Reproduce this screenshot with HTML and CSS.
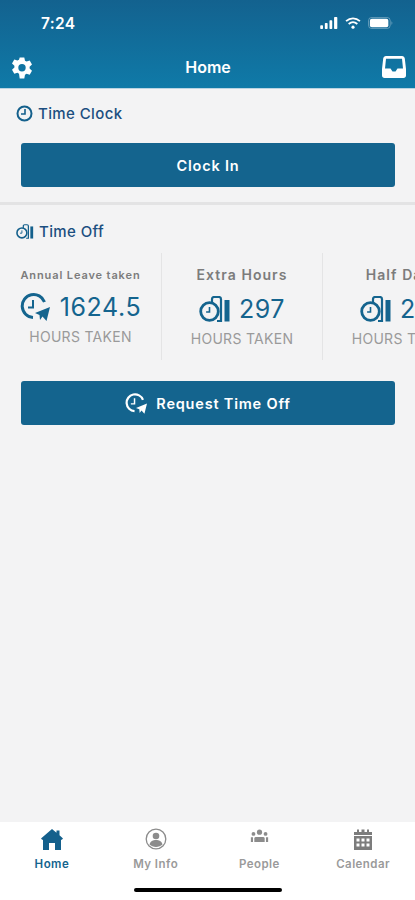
FILE: index.html
```html
<!DOCTYPE html>
<html lang="en">
<head>
    <meta charset="UTF-8">
    <meta name="viewport" content="width=device-width, initial-scale=1.0">
    <title>Home</title>
    <link rel="stylesheet" href="styles.css">
</head>
<body>
    <svg class="icon-defs" width="0" height="0">
        <symbol id="timer-bars" viewBox="0 0 32 26">
            <path d="M13 7V3.200C13 2 14 1 15.200 1h4.600C21 1 22 2 22 3.200V25h-4" fill="none" stroke="currentColor" stroke-width="2.200"/>
            <circle cx="10.500" cy="15.500" r="8.800" fill="none" stroke="currentColor" stroke-width="2.800"/>
            <path d="M10.500 11v5h-3.400" fill="none" stroke="currentColor" stroke-width="1.600"/>
            <rect x="25.500" y="4" width="5" height="21.500" fill="currentColor"/>
        </symbol>
        <symbol id="clock-send" viewBox="0 0 30 28">
            <path d="M24.500 9A11.500 11.500 0 1 0 13 24.500" fill="none" stroke="currentColor" stroke-width="3"/>
            <path d="M13 7v7.500H8" fill="none" stroke="currentColor" stroke-width="2"/>
            <path d="M30 14 26.500 28l-4-4.500-2.500 3.500-.5-5L15 20z" fill="currentColor"/>
        </symbol>
    </svg>

    <header class="top-bar">
        <div class="status-bar">
            <span class="status-time">7:24</span>
            <div class="status-icons">
                <svg width="18" height="12" viewBox="0 0 19 13" fill="#fff">
                    <rect x="0" y="9" width="3" height="4" rx=".8"/>
                    <rect x="5" y="6.500" width="3" height="6.500" rx=".8"/>
                    <rect x="10" y="3.500" width="3" height="9.500" rx=".8"/>
                    <rect x="15" y="0" width="3.500" height="13" rx=".8"/>
                </svg>
                <svg width="16" height="12" viewBox="0 0 17 13" fill="none" stroke="#fff" stroke-width="2">
                    <path d="M1 4.500C5.500.5 11.500.5 16 4.500"/>
                    <path d="M3.800 7.500c2.800-2.300 6.600-2.300 9.400 0"/>
                    <circle cx="8.500" cy="11" r="1.700" fill="#fff" stroke="none"/>
                </svg>
                <svg width="25" height="12" viewBox="0 0 27 13">
                    <rect x=".5" y=".5" width="23.500" height="12" rx="3.500" fill="none" stroke="#fff" stroke-opacity=".35"/>
                    <rect x="2" y="2" width="20" height="9" rx="2" fill="#fff"/>
                    <path d="M25.500 4.500c1 .4 1 3.600 0 4z" fill="#fff" fill-opacity=".45"/>
                </svg>
            </div>
        </div>
        <nav class="nav-bar">
            <svg width="24" height="25" viewBox="0 0 24 24">
                <path fill="#fff" fill-rule="evenodd" d="M9.700 1h4.600l.7 3.200 1.600.9 3.100-1 2.300 4-2.400 2.200v1.800l2.400 2.200-2.300 4-3.100-1-1.600.9-.7 3.800H9.700L9 17.200l-1.600-.9-3.100 1-2.300-4 2.400-2.200V9.300L2 7.100l2.300-4 3.100 1L9 3.200zM12 7.500a3.700 3.700 0 1 0 0 7.400 3.700 3.700 0 0 0 0-7.400z" transform="translate(0 1)"/>
            </svg>
            <h1 class="nav-title">Home</h1>
            <svg width="24" height="22" viewBox="0 0 24 22">
                <path fill="#fff" fill-rule="evenodd" d="M4 0h16c1.500 0 2.500 1 2.800 2.500L24 13v6.500c0 1.500-1 2.500-2.500 2.500h-19C1 22 0 21 0 19.500V13L1.200 2.500C1.500 1 2.500 0 4 0zm0 2.800L3 12.500h5.500l2 3h3l2-3H21l-1-9.700z"/>
            </svg>
        </nav>
    </header>

    <main class="content">
        <section class="clock-section">
            <h2 class="section-title">
                <svg width="17" height="17" viewBox="0 0 17 17" fill="none" stroke="#14608c" stroke-width="2">
                    <circle cx="8.500" cy="8.500" r="7"/>
                    <path d="M9 4v5H5" stroke-width="1.600"/>
                </svg>
                Time Clock
            </h2>
            <button class="primary-btn">Clock In</button>
        </section>

        <section class="off-section">
            <h2 class="section-title">
                <svg class="title-timer" width="18" height="15"><use href="#timer-bars"/></svg>
                Time Off
            </h2>
            <div class="balances">
                <div class="balance balance-first">
                    <div class="balance-name balance-name-small">Annual Leave taken</div>
                    <div class="balance-value">
                        <svg width="30" height="28"><use href="#clock-send"/></svg>
                        <span>1624.5</span>
                    </div>
                    <div class="balance-unit">HOURS TAKEN</div>
                </div>
                <div class="balance">
                    <div class="balance-name">Extra Hours</div>
                    <div class="balance-value">
                        <svg width="32" height="26"><use href="#timer-bars"/></svg>
                        <span>297</span>
                    </div>
                    <div class="balance-unit">HOURS TAKEN</div>
                </div>
                <div class="balance">
                    <div class="balance-name">Half Days</div>
                    <div class="balance-value">
                        <svg width="32" height="26"><use href="#timer-bars"/></svg>
                        <span>297</span>
                    </div>
                    <div class="balance-unit">HOURS TAKEN</div>
                </div>
            </div>
            <button class="primary-btn">
                <svg class="btn-icon" width="22" height="21"><use href="#clock-send"/></svg>
                Request Time Off
            </button>
        </section>
    </main>

    <footer class="tab-bar">
        <div class="tabs">
            <div class="tab tab-active">
                <svg width="22" height="21" viewBox="0 0 22 21" fill="#14608c">
                    <path d="M11 0 15.500 3.800V1.500h3v4.800L22 9.500l-1.400 1.500-.6-.5V21h-6v-7H8v7H2V10.500l-.6.500L0 9.500z"/>
                </svg>
                <span>Home</span>
            </div>
            <div class="tab">
                <svg width="22" height="22" viewBox="0 0 22 22">
                    <circle cx="11" cy="11" r="9.800" fill="none" stroke="#8c8c8c" stroke-width="1.300"/>
                    <circle cx="11" cy="8" r="3.300" fill="#8c8c8c"/>
                    <path d="M4.500 16.500c1-3.500 3.500-4.500 6.500-4.500s5.500 1 6.500 4.500C15.800 18 13.500 19 11 19s-4.800-1-6.500-2.500z" fill="#8c8c8c"/>
                </svg>
                <span>My Info</span>
            </div>
            <div class="tab">
                <svg width="19" height="21" viewBox="0 0 22 24" fill="#8c8c8c">
                    <circle cx="11" cy="3.500" r="3"/>
                    <circle cx="4" cy="5.500" r="2.200"/>
                    <circle cx="18" cy="5.500" r="2.200"/>
                    <path d="M6.500 9h9c1 0 1.500 1 1.500 2v4H5v-4c0-1 .5-2 1.500-2z"/>
                    <path d="M1 9.500h2.500V15H1zM18.500 9.500H21V15h-2.500z"/>
                </svg>
                <span>People</span>
            </div>
            <div class="tab">
                <svg width="20" height="22" viewBox="0 0 20 22" fill="#7c7c7c">
                    <path d="M1 4h3V1.500h2V4h2.500V1.500h3V4H14V1.500h2V4h3v3H1z"/>
                    <path fill-rule="evenodd" d="M1 8h18v14H1zM3.500 10.500v3h3v-3zm5 0v3h3v-3zm5 0v3h3v-3zm-10 5v3h3v-3zm5 0v3h3v-3zm5 0v3h3v-3z"/>
                </svg>
                <span>Calendar</span>
            </div>
        </div>
        <div class="home-indicator"></div>
    </footer>
</body>
</html>
```

FILE: styles.css
```css
:root {
    --primary: #14648e;
    --title: #1b4f80;
    --grey: #7c7c7c;
    --grey-light: #9a9a9a;
    --page: #f3f3f4;
}

* {
    margin: 0;
    padding: 0;
    box-sizing: border-box;
    font-family: 'Inter', 'Liberation Sans', sans-serif;
}

html, body {
    height: 900px;
    overflow: hidden;
}

body {
    background: var(--page);
    display: flex;
    flex-direction: column;
}

.icon-defs {
    position: absolute;
}

.top-bar {
    height: 89px;
    background: linear-gradient(to bottom, #13628f, #0f7aa8);
    border-bottom: 1px solid #b9d4e2;
    color: white;
    flex-shrink: 0;
}

.status-bar {
    height: 46px;
    padding: 0 22px 0 41px;
    display: flex;
    justify-content: space-between;
    align-items: center;
}

.status-time {
    font-size: 15.500px;
    font-weight: 600;
    letter-spacing: 0.3px;
}

.status-icons {
    display: flex;
    align-items: center;
    gap: 7px;
}

.nav-bar {
    height: 42px;
    padding: 0 9px 0 10px;
    display: flex;
    justify-content: space-between;
    align-items: center;
}

.nav-title {
    font-size: 16px;
    font-weight: 600;
}

.content {
    flex: 1;
}

.clock-section {
    height: 116px;
    padding: 15px 20px 0 21px;
    border-bottom: 3px solid #e3e3e4;
}

.off-section {
    padding: 17px 20px 0 21px;
}

.section-title {
    margin-left: -5px;
    height: 18px;
    display: flex;
    align-items: center;
    gap: 5px;
    font-size: 15px;
    font-weight: 500;
    letter-spacing: 0.4px;
    color: var(--title);
}

.title-timer {
    color: #14608c;
}

.primary-btn {
    width: 100%;
    height: 44px;
    margin-top: 21px;
    display: flex;
    justify-content: center;
    align-items: center;
    gap: 9px;
    background: var(--primary);
    color: white;
    border: none;
    border-radius: 3px;
    font-size: 14.500px;
    font-weight: 600;
    letter-spacing: 0.8px;
}

.btn-icon {
    color: white;
}

.balances {
    margin: 13px -20px 0 -21px;
    height: 107px;
    display: flex;
    overflow: hidden;
}

.balance {
    flex: 0 0 161px;
    padding-top: 13px;
    border-right: 1px solid #e4e4e5;
    display: flex;
    flex-direction: column;
    align-items: center;
    color: var(--grey);
}

.balance-first {
    flex-basis: 162px;
}

.balance-name {
    height: 18px;
    line-height: 18px;
    font-size: 14px;
    font-weight: 600;
    letter-spacing: 1.05px;
    white-space: nowrap;
}

.balance-name-small {
    font-size: 11px;
    letter-spacing: 0.88px;
}

.balance-value {
    height: 32px;
    margin-top: 9px;
    display: flex;
    align-items: center;
    gap: 8px;
    color: var(--primary);
    font-size: 25px;
    letter-spacing: 0.6px;
    white-space: nowrap;
}

.balance-first .balance-value {
    margin-top: 7px;
    gap: 10px;
}

.balance-unit {
    margin-top: 5px;
    font-size: 14px;
    letter-spacing: 0.3px;
    color: var(--grey-light);
    white-space: nowrap;
}

.tab-bar {
    height: 78px;
    background: white;
    flex-shrink: 0;
    display: flex;
    flex-direction: column;
    align-items: center;
}

.tabs {
    width: 100%;
    height: 58px;
    display: flex;
    padding-top: 6px;
}

.tab {
    flex: 1;
    display: flex;
    flex-direction: column;
    align-items: center;
    justify-content: flex-end;
    gap: 7px;
    padding-bottom: 9px;
    font-size: 11.500px;
    font-weight: 600;
    letter-spacing: 0.45px;
    color: #9a9a9a;
}

.tab-active {
    color: var(--primary);
}

.home-indicator {
    width: 148px;
    height: 4px;
    margin-top: 8px;
    background: #000;
    border-radius: 2px;
}
```
